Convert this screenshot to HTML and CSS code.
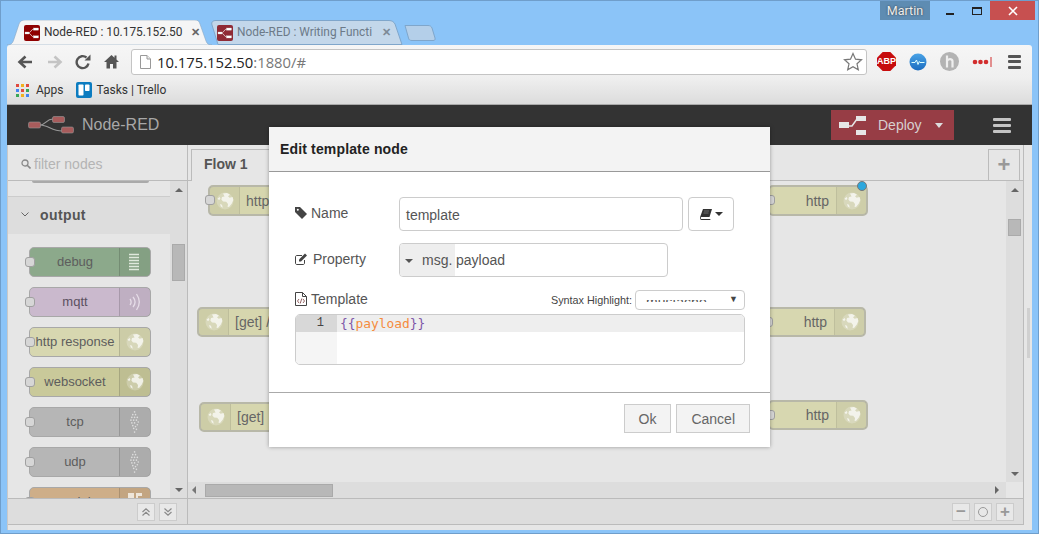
FILE: index.html
```html
<!DOCTYPE html>
<html>
  <head>
    <meta charset="utf-8">
    <title>Node-RED</title>
    <link rel="stylesheet" href="styles.css">
  </head>
  <body>
    <svg class="defs" width="0" height="0">
      <symbol id="globe" viewBox="0 0 18 18">
        <circle cx="9" cy="9" r="8.5" fill="#fff" opacity=".22"/>
        <path fill="#fff" opacity=".7" d="M7 1.500l4-.6 3 1.800-2 1.600 1.600 1.400 3-.6.8 3-1.600 3.400-2.600 3.200-1.600.2.400-3-1.800-2.200-3.200-.2-1.600-2L6 5l2.600-.6zM1.600 6.500l2.200-1.600.6 1.800-1.400 1.600zM4 12l2 .8.800 3-2-1.400z"/>
      </symbol>
      <symbol id="favicon" viewBox="0 0 16 16">
        <rect width="16" height="16" rx="2" fill="currentColor"/>
        <path d="M4 8c3 0 3-4 6-4M4 8c3 0 3 4 6 4" fill="none" stroke="#e8d8d8" stroke-width=".8"/>
        <rect x="1" y="7" width="4" height="2" fill="#fff" stroke="#ccc" stroke-width=".3"/>
        <rect x="9.500" y="3" width="5" height="2.200" fill="#fff" stroke="#ccc" stroke-width=".3"/>
        <rect x="9.500" y="10.800" width="5" height="2.200" fill="#fff" stroke="#ccc" stroke-width=".3"/>
      </symbol>
      <symbol id="udp-wave" viewBox="0 0 12 24">
        <g fill="#ddd">
          <circle cx="5" cy="1" r=".9"/><circle cx="3" cy="4" r=".9"/><circle cx="6" cy="4" r=".9"/><circle cx="2" cy="7" r=".9"/><circle cx="5" cy="7" r=".9"/><circle cx="8" cy="7" r=".9"/><circle cx="1" cy="10" r=".9"/><circle cx="4" cy="10" r=".9"/><circle cx="7" cy="10" r=".9"/><circle cx="9" cy="12" r=".9"/><circle cx="2" cy="13" r=".9"/><circle cx="5" cy="13" r=".9"/><circle cx="8" cy="15" r=".9"/><circle cx="3" cy="16" r=".9"/><circle cx="6" cy="17" r=".9"/><circle cx="4" cy="19" r=".9"/><circle cx="7" cy="20" r=".9"/><circle cx="5" cy="23" r=".9"/>
        </g>
      </symbol>
    </svg>

    <div class="window">
      <div class="titlebar">
        <span class="user-badge">Martin</span>
        <span class="win-btn win-min"><i></i></span>
        <span class="win-btn win-max"><i></i></span>
        <span class="win-btn win-close">
          <svg width="10" height="10" viewBox="0 0 10 10"><path d="M1 1l8 8M9 1l-8 8" stroke="#fff" stroke-width="1.600"/></svg>
        </span>
      </div>

      <div class="tabstrip">
        <div class="tab tab-active">
          <svg class="tab-shape" width="205" height="25" viewBox="0 0 205 25"><path d="M0 25C5 25 6 22 7 19L12 4C13 1 15 0 18 0H188C191 0 192 1 193 4L199 21C200 24 202 25 205 25Z" fill="#f5f5f5" stroke="#8aa8c4" stroke-width=".6"/></svg>
          <svg class="favicon fav-active" width="16" height="16"><use href="#favicon"/></svg>
          <span class="tab-title">Node-RED : 10.175.152.50</span>
          <span class="tab-close">&#10005;</span>
        </div>
        <div class="tab tab-back">
          <svg class="tab-shape" width="197" height="25" viewBox="0 0 197 25"><path d="M9 24.500L3 5C2 2 4 .500 7 .500H180C183 .500 185 2 186 4L193 24.500Z" fill="#c3d7ea" stroke="#7fa6cb"/></svg>
          <svg class="favicon fav-back" width="16" height="16"><use href="#favicon"/></svg>
          <span class="tab-title">Node-RED : Writing Functi</span>
          <span class="tab-close">&#10005;</span>
        </div>
        <svg class="tab-new" width="32" height="16" viewBox="0 0 32 16"><path d="M1 .500H24C26 .500 27 1 28 3L31 13C31.500 15 30.500 15.500 29 15.500H8C6 15.500 5 15 4.500 13Z" fill="#b4cfe9" stroke="#7fa6cb"/></svg>
      </div>

      <div class="toolbar">
        <svg class="nav-icon" width="16" height="14" viewBox="0 0 16 14"><path d="M15 7H4M8.500 1.500L2.500 7l6 5.500" fill="none" stroke="#555" stroke-width="2.600"/></svg>
        <svg class="nav-icon" width="16" height="14" viewBox="0 0 16 14"><path d="M1 7h11M7.500 1.500l6 5.500-6 5.500" fill="none" stroke="#c4c4c4" stroke-width="2.600"/></svg>
        <svg class="nav-icon" width="16" height="16" viewBox="0 0 16 16"><path d="M13.500 9.500A6 6 0 1 1 11.500 3.500" fill="none" stroke="#555" stroke-width="2.400"/><path d="M9.500 6.500h6v-6z" fill="#555"/></svg>
        <svg class="nav-icon" width="15" height="15" viewBox="0 0 15 15"><path d="M7.500 1L0 8h2.500v6.500h3.500V10h3v4.500h3.500V8H15l-2.500-2.400V1.500h-2v2.200z" fill="#555"/></svg>
        <div class="omnibox">
          <svg width="11" height="14" viewBox="0 0 11 14"><path d="M.5.500h6.500l3.500 3.500v9.500H.5z" fill="#fff" stroke="#999"/><path d="M7 .500V4h3.500" fill="#eee" stroke="#999"/></svg>
          <span class="url"><b>10.175.152.50</b>:1880/#</span>
          <svg class="star" width="20" height="19" viewBox="0 0 20 19"><path d="M10 1.500l2.500 5.700 6 .6-4.500 4 1.300 6L10 14.700l-5.300 3.100 1.300-6-4.500-4 6-.6z" fill="#fff" stroke="#777" stroke-width="1.200"/></svg>
        </div>
        <div class="extensions">
          <span class="ext-abp">ABP</span>
          <svg width="18" height="18" viewBox="0 0 18 18"><defs><linearGradient id="blueball" x1="0" y1="0" x2="0" y2="1"><stop offset="0" stop-color="#4aa3e6"/><stop offset="1" stop-color="#1a6cc0"/></linearGradient></defs><circle cx="9" cy="9" r="8.500" fill="url(#blueball)"/><path d="M2.500 9.500h3.500l1.500-2.500 1.500 4.500 1.300-3 .7 1h4.500" fill="none" stroke="#dff" stroke-width="1"/></svg>
          <svg width="19" height="19" viewBox="0 0 19 19"><circle cx="9.500" cy="9.500" r="9.500" fill="#b3b3b3"/><path d="M7 3.500v12M7 9c1-2.500 5-2.500 5.500 0v6.500" fill="none" stroke="#eee" stroke-width="2.200"/></svg>
          <svg width="20" height="10" viewBox="0 0 20 10"><g fill="#d22d2d"><circle cx="3" cy="5" r="2.300"/><circle cx="8.500" cy="5" r="2.300"/><circle cx="14" cy="5" r="2.300"/></g><rect x="18.500" width="1" height="10" fill="#d22d2d"/></svg>
          <span class="chrome-menu"><i></i><i></i><i></i></span>
        </div>
      </div>

      <div class="bookmarks">
        <span class="apps-grid"><i class="r"></i><i class="y"></i><i class="r"></i><i class="b"></i><i class="r"></i><i class="g"></i><i class="g"></i><i class="y"></i><i class="b"></i></span>
        <span class="bm-label">Apps</span>
        <svg class="trello" width="16" height="16" viewBox="0 0 16 16"><rect width="16" height="16" rx="2" fill="#0c7cc0"/><rect x="2.500" y="2.500" width="5" height="11" rx=".8" fill="#fff"/><rect x="9" y="2.500" width="4.500" height="6.500" rx=".8" fill="#fff"/></svg>
        <span class="bm-label">Tasks | Trello</span>
      </div>

      <header class="app-header">
        <svg class="logo" width="46" height="18" viewBox="0 0 46 18"><path d="M12 9C18 9 18 3 25 3M12 9C20 9 24 15 34 15" fill="none" stroke="#999" stroke-width="1.200"/><rect x=".5" y="6" width="12" height="6" rx="1.500" fill="#a85c5c" stroke="#999" stroke-width=".6"/><rect x="24.500" y=".500" width="12" height="6" rx="1.500" fill="#a85c5c" stroke="#999" stroke-width=".6"/><rect x="33.500" y="11" width="12" height="6" rx="1.500" fill="#a85c5c" stroke="#999" stroke-width=".6"/></svg>
        <span class="app-name">Node-RED</span>
        <div class="deploy">
          <svg width="28" height="23" viewBox="0 0 28 23"><path d="M9 12h4l5-7" fill="none" stroke="#e6e6e6" stroke-width="1.500"/><rect y="8" width="10" height="6" fill="#e6e6e6"/><rect x="17" y="2" width="10" height="5" fill="#e6e6e6"/><rect x="17" y="16" width="10" height="5" fill="#e6e6e6"/></svg>
          <span class="deploy-label">Deploy</span>
          <span class="deploy-caret"></span>
        </div>
        <span class="app-menu"><i></i><i></i><i></i></span>
      </header>

      <div class="main">
        <aside class="palette">
          <div class="palette-search">
            <svg width="10" height="10" viewBox="0 0 10 10"><circle cx="4" cy="4" r="3" fill="none" stroke="#888" stroke-width="1.300"/><path d="M6.200 6.200L9.500 9.500" stroke="#888" stroke-width="1.600"/></svg>
            <span>filter nodes</span>
          </div>
          <div class="palette-body">
            <div class="palette-list">
              <div class="stub"></div>
              <div class="category">
                <svg width="8" height="5" viewBox="0 0 8 5"><path d="M.5.500L4 4 7.500.500" fill="none" stroke="#666"/></svg>
                <span>output</span>
              </div>
              <div class="palette-nodes">
                <div class="pnode c-debug"><span class="port"></span><span class="pnode-label">debug</span><span class="pnode-icon"><svg width="14" height="18" viewBox="0 0 14 18"><path d="M1 1.500h10M1 4.500h10M1 7.500h10M1 10.500h10M1 13.500h10M1 16.500h10" stroke="#dfe8dc" stroke-width="1.600" fill="none"/></svg></span></div>
                <div class="pnode c-mqtt"><span class="port"></span><span class="pnode-label">mqtt</span><span class="pnode-icon"><svg width="14" height="20" viewBox="0 0 14 20"><path d="M2 7c1.500 2 1.500 4 0 6M5 5c2.500 3 2.500 7 0 10M8.500 2c3.500 5 3.500 11 0 16" fill="none" stroke="#e6dde8" stroke-width="1.300"/></svg></span></div>
                <div class="pnode c-http"><span class="port"></span><span class="pnode-label">http response</span><span class="pnode-icon"><svg width="18" height="18"><use href="#globe"/></svg></span></div>
                <div class="pnode c-socket"><span class="port"></span><span class="pnode-label">websocket</span><span class="pnode-icon"><svg width="18" height="18"><use href="#globe"/></svg></span></div>
                <div class="pnode c-net"><span class="port"></span><span class="pnode-label">tcp</span><span class="pnode-icon"><svg width="11" height="22"><use href="#udp-wave"/></svg></span></div>
                <div class="pnode c-net"><span class="port"></span><span class="pnode-label">udp</span><span class="pnode-icon"><svg width="11" height="22"><use href="#udp-wave"/></svg></span></div>
                <div class="pnode c-file"><span class="port"></span><span class="pnode-label">serial</span><span class="pnode-icon"><svg width="16" height="20" viewBox="0 0 16 20"><path d="M1 1h6v14H1zM9 1h6v3H11v11H9z" fill="#eee6da"/></svg></span></div>
              </div>
            </div>
            <div class="scrollbar scroll-v palette-scroll">
              <span class="arrow-up"></span>
              <span class="thumb"></span>
              <span class="arrow-down"></span>
            </div>
          </div>
          <div class="palette-footer">
            <span class="tool-btn"><svg width="8" height="8" viewBox="0 0 8 8"><path d="M.5 4L4 .8 7.500 4M.5 7.500L4 4.300l3.500 3.200" fill="none" stroke="#8a8a8a" stroke-width="1.200"/></svg></span>
            <span class="tool-btn"><svg width="8" height="8" viewBox="0 0 8 8"><path d="M.5.500L4 3.700 7.500.5M.5 4L4 7.200 7.500 4" fill="none" stroke="#8a8a8a" stroke-width="1.200"/></svg></span>
          </div>
        </aside>

        <section class="workspace">
          <div class="ws-tabs">
            <div class="ws-tab">Flow 1</div>
            <div class="ws-add">+</div>
          </div>
          <div class="ws-canvas-row">
            <div class="canvas">
              <div class="node c-canvas n1"><span class="port port-l"></span><span class="node-icon"><svg width="18" height="18"><use href="#globe"/></svg></span><span class="node-label">http</span></div>
              <div class="node c-canvas n2"><span class="node-icon"><svg width="18" height="18"><use href="#globe"/></svg></span><span class="node-label">[get] /</span></div>
              <div class="node c-canvas n3"><span class="node-icon"><svg width="18" height="18"><use href="#globe"/></svg></span><span class="node-label">[get]</span></div>
              <div class="node c-light r1"><span class="port port-l"></span><span class="node-label">http</span><span class="node-icon icon-r"><svg width="18" height="18"><use href="#globe"/></svg></span><span class="changed"></span></div>
              <div class="node c-light r2"><span class="port port-l"></span><span class="node-label">http</span><span class="node-icon icon-r"><svg width="18" height="18"><use href="#globe"/></svg></span></div>
              <div class="node c-light r3"><span class="port port-l"></span><span class="node-label">http</span><span class="node-icon icon-r"><svg width="18" height="18"><use href="#globe"/></svg></span></div>
            </div>
            <div class="scrollbar scroll-v canvas-scroll">
              <span class="arrow-up"></span>
              <span class="thumb"></span>
              <span class="arrow-down"></span>
            </div>
          </div>
          <div class="scroll-h-row">
            <div class="scroll-h">
              <span class="arrow-left"></span>
              <span class="thumb-h"></span>
              <span class="arrow-right"></span>
            </div>
            <div class="scroll-corner"></div>
          </div>
          <div class="ws-footer">
            <span class="tool-btn tool-zoom">&minus;</span>
            <span class="tool-btn tool-zoom"><i class="zoom-ring"></i></span>
            <span class="tool-btn tool-zoom">+</span>
          </div>
        </section>

        <div class="page-scroll"><span></span></div>
      </div>

      <div class="modal">
        <div class="modal-title">Edit template node</div>
        <div class="modal-body">
          <div class="form-row">
            <label class="form-label">
              <svg width="12" height="12" viewBox="0 0 12 12"><path d="M0 0h5l7 7-5 5-7-7z" fill="#444"/><circle cx="2.800" cy="2.800" r="1" fill="#fff"/></svg>
              Name
            </label>
            <div class="text-input name-input">template</div>
            <div class="book-btn">
              <svg width="12" height="11" viewBox="0 0 12 11"><path d="M3 0h9l-2.500 8H2C1 8 .7 8.500 .7 9s.3 1 1.300 1h8.500l-.3 1H1.500C.5 11 0 10 0 9c0-.5 0-1 .3-1.500z" fill="#333"/><path d="M4 2h5M3.500 4h5" stroke="#999" stroke-width=".6"/></svg>
              <span class="caret"></span>
            </div>
          </div>
          <div class="form-row">
            <label class="form-label">
              <svg width="13" height="12" viewBox="0 0 13 12"><path d="M9.500 7v3c0 1-.5 1.500-1.500 1.500H2C1 11.500.5 11 .5 10V4C.5 3 1 2.500 2 2.500h5" fill="none" stroke="#444"/><path d="M4 6.500L10 .5l2 2-6 6H4z" fill="#444"/></svg>
              <span class="prop-text">Property</span>
            </label>
            <div class="typed-input">
              <span class="typed-type"><span class="caret"></span>msg.</span>
              <span class="typed-value">payload</span>
            </div>
          </div>
          <div class="template-row">
            <label class="form-label">
              <svg width="12" height="14" viewBox="0 0 12 14"><path d="M.5.500h7l4 4v9H.5z" fill="none" stroke="#444"/><path d="M7.500.500v4h4" fill="none" stroke="#444"/><path d="M4 7L2.500 9 4 11M8 7l1.500 2L8 11M6.800 6.500L5.200 11.500" fill="none" stroke="#7a3b3b" stroke-width=".8"/></svg>
              Template
            </label>
            <div class="syntax">
              <span class="syntax-label">Syntax Highlight:</span>
              <div class="syntax-select">
                <span class="syntax-clip"><span>mustache</span></span>
                <span class="syntax-arrow">&#9660;</span>
              </div>
            </div>
          </div>
          <div class="editor">
            <div class="editor-line">
              <span class="gutter-num">1</span>
              <code class="code"><span class="brace">{{</span><span class="var">payload</span><span class="brace">}}</span></code>
            </div>
            <div class="editor-rest"><span class="gutter-rest"></span></div>
          </div>
        </div>
        <div class="modal-footer">
          <span class="btn">Ok</span>
          <span class="btn">Cancel</span>
        </div>
      </div>
    </div>
  </body>
</html>
```

FILE: styles.css
```css
* { box-sizing: border-box; }
body {
  margin: 0;
  width: 1039px;
  height: 534px;
  overflow: hidden;
  font-family: "Liberation Sans", Arial, sans-serif;
  font-size: 14px;
  color: #555;
}
.defs { position: absolute; }
.window {
  position: relative;
  width: 1039px;
  height: 534px;
  display: flex;
  flex-direction: column;
  padding: 0 6px 3px;
  background: #8bc4f8;
  border: 1px solid #6f9ecb;
  overflow: hidden;
}

/* window controls */
.titlebar {
  height: 19px;
  margin-right: -3px;
  display: flex;
  justify-content: flex-end;
  flex: none;
}
.user-badge {
  width: 50px;
  margin-right: 8px;
  background: #5e8cb2;
  color: #eee;
  font: 12.500px/20px Roboto, sans-serif;
  text-align: center;
  text-shadow: 0 0 2px #333;
}
.win-btn {
  width: 26px;
  display: flex;
  align-items: center;
  justify-content: center;
}
.win-min i { width: 8px; height: 2px; margin: 7px 2px 0 0; background: #222; }
.win-max i { width: 10px; height: 8px; border: 1px solid #222; border-top-width: 2px; }
.win-close { width: 45px; margin-left: 0; background: #c75050; }

/* browser tabs */
.tabstrip {
  height: 25px;
  flex: none;
  display: flex;
  align-items: flex-start;
  color: #333;
  font: 11.900px/25px Roboto, sans-serif;
}
.tab {
  position: relative;
  height: 25px;
  display: flex;
  align-items: center;
  flex: none;
}
.tab-shape { position: absolute; left: 0; top: 0; }
.tab-active { width: 205px; padding-left: 17px; }
.tab-back { width: 197px; margin-left: -3px; padding-left: 8px; color: #6c7a88; }
.favicon { position: relative; flex: none; margin-right: 4px; }
.fav-active { color: #8f0000; }
.fav-back { color: #8f2a35; }
.tab-title { position: relative; width: 139px; white-space: nowrap; overflow: hidden; }
.tab-close {
  position: relative;
  margin-left: 8px;
  color: #666;
  font-size: 11px;
  font-weight: bold;
}
.tab-back .tab-close { margin-left: 6px; color: #7d8a96; }
.tab-new { margin: 5px 0 0 -2px; flex: none; }

/* browser toolbar */
.toolbar {
  height: 33px;
  flex: none;
  display: flex;
  align-items: center;
  padding-left: 10px;
  background: linear-gradient(#f6f6f6, #efefef);
  border-radius: 3px 3px 0 0;
}
.nav-icon { margin-right: 14px; flex: none; }
.nav-icon + .nav-icon { margin-right: 12px; }
.nav-icon + .nav-icon + .nav-icon { margin-right: 13px; }
.omnibox {
  width: 736px;
  height: 26px;
  margin-left: -1px;
  flex: none;
  display: flex;
  align-items: center;
  padding: 0 3px 0 8px;
  background: #fff;
  border: 1px solid #c4c4c4;
  border-radius: 3px;
}
.url {
  margin-left: 6px;
  color: #777;
  font: 14.800px "Open Sans", sans-serif;
}
.url b { font-weight: normal; color: #222; }
.star { margin-left: auto; }
.extensions {
  flex: 1;
  display: flex;
  align-items: center;
  gap: 13px;
  padding-left: 10px;
}
.ext-abp {
  width: 19px;
  height: 19px;
  background: #c70d0d;
  color: #fff;
  font: bold 9px/19px "Liberation Sans", sans-serif;
  text-align: center;
  clip-path: polygon(30% 0, 70% 0, 100% 30%, 100% 70%, 70% 100%, 30% 100%, 0 70%, 0 30%);
}
.chrome-menu {
  width: 13px;
  margin-left: 3px;
  display: flex;
  flex-direction: column;
  gap: 2.500px;
}
.chrome-menu i { height: 3px; background: #555; border-radius: 1px; }

/* bookmarks bar */
.bookmarks {
  height: 27px;
  flex: none;
  display: flex;
  align-items: center;
  padding: 0 0 2px 9px;
  background: linear-gradient(#efefef, #dcdcdc);
  border-bottom: 1px solid #aaa;
  color: #333;
  font: 12px Roboto, sans-serif;
}
.apps-grid {
  width: 13px;
  height: 13px;
  display: grid;
  grid-template-columns: repeat(3, 3px);
  gap: 2px;
}
.apps-grid .r { background: #e04a3f; }
.apps-grid .y { background: #f2b01e; }
.apps-grid .g { background: #3aa757; }
.apps-grid .b { background: #4285f4; }
.bm-label { margin-left: 7px; }
.trello { margin-left: 12px; }
.trello + .bm-label { margin-left: 5px; }

/* Node-RED header */
.app-header {
  height: 40px;
  flex: none;
  display: flex;
  align-items: center;
  padding-left: 21px;
  background: #333;
}
.app-name { margin-left: 8px; color: #a8a8a8; font-size: 16px; }
.deploy {
  width: 123px;
  height: 30px;
  margin-left: auto;
  display: flex;
  align-items: center;
  padding-left: 8px;
  background: #973d45;
  color: #d8d0d0;
}
.deploy-label { margin-left: 11px; }
.deploy-caret {
  margin-left: 13px;
  border: 4px solid transparent;
  border-top: 5px solid #ddd;
  border-bottom: 0;
}
.app-menu {
  width: 18px;
  margin: 0 21px 0 39px;
  display: flex;
  flex-direction: column;
  gap: 3px;
}
.app-menu i { height: 3px; background: #c4c4c4; border-radius: 1px; }

/* main area */
.main {
  flex: 1;
  min-height: 0;
  display: flex;
  background: #e6e6e6;
  border-left: 1px solid #c8c8c8;
}
.palette {
  width: 180px;
  flex: none;
  display: flex;
  flex-direction: column;
  border-right: 1px solid #bbb;
  border-bottom: 1px solid #bbb;
  margin-bottom: 5px;
}
.palette-search {
  height: 36px;
  flex: none;
  display: flex;
  align-items: center;
  gap: 3px;
  padding: 2px 0 0 13px;
  border-bottom: 1px solid #bbb;
  color: #b4b4b4;
}
.palette-body { flex: 1; min-height: 0; display: flex; }
.palette-list { flex: 1; overflow: hidden; }
.stub {
  width: 117px;
  height: 2px;
  margin-left: 24px;
  background: #aaa;
  border-radius: 0 0 3px 3px;
}
.category {
  height: 38px;
  margin-top: 13px;
  display: flex;
  align-items: center;
  gap: 11px;
  padding: 0 0 2px 13px;
  background: #ddd;
  border-top: 1px solid #ccc;
  color: #555;
  font-weight: bold;
  letter-spacing: .4px;
}
.palette-nodes {
  display: flex;
  flex-direction: column;
  gap: 10px;
  padding: 13px 0 0 21px;
}
.pnode {
  position: relative;
  width: 122px;
  height: 30px;
  flex: none;
  display: flex;
  align-items: center;
  border: 1px solid #a8a8a8;
  border-radius: 5px;
  font-size: 13px;
  color: #5d5d5d;
}
.pnode-label { flex: 1; padding: 0 0 2px 1px; text-align: center; white-space: nowrap; }
.pnode-icon {
  width: 31px;
  height: 28px;
  flex: none;
  display: flex;
  align-items: center;
  justify-content: center;
  background: rgba(0, 0, 0, .05);
  border-left: 1px solid rgba(0, 0, 0, .12);
}
.port {
  position: absolute;
  left: -5px;
  top: 9px;
  width: 10px;
  height: 10px;
  background: #d6d6d6;
  border: 1px solid #a0a0a0;
  border-radius: 3px;
}
.c-debug { background: #8ca98b; }
.c-mqtt { background: #cab9cd; color: #5a5060; }
.c-http { background: #d7d7b0; }
.c-socket { background: #c9c99a; }
.c-net { background: #b6b6b6; }
.c-file { background: #ceae88; }

/* scrollbars */
.scrollbar {
  position: relative;
  width: 17px;
  flex: none;
  background: #ddd;
}
.arrow-up, .arrow-down, .arrow-left, .arrow-right { position: absolute; width: 0; height: 0; }
.arrow-up {
  top: 7px;
  left: 5px;
  border: 4px solid transparent;
  border-top: 0;
  border-bottom: 4px solid #666;
}
.arrow-down {
  bottom: 6px;
  left: 5px;
  border: 4px solid transparent;
  border-bottom: 0;
  border-top: 4px solid #666;
}
.arrow-left {
  top: 4px;
  left: 4px;
  border: 4px solid transparent;
  border-left: 0;
  border-right: 4px solid #777;
}
.arrow-right {
  top: 4px;
  right: 7px;
  border: 4px solid transparent;
  border-right: 0;
  border-left: 4px solid #666;
}
.thumb {
  position: absolute;
  left: 2px;
  width: 13px;
  background: #b8b8b8;
  border: 1px solid #aaa;
}
.palette-scroll .thumb { top: 63px; height: 37px; }
.canvas-scroll .thumb { top: 38px; height: 17px; }
.palette-footer, .ws-footer {
  height: 26px;
  flex: none;
  display: flex;
  justify-content: flex-end;
  align-items: center;
  gap: 4px;
  background: #ddd;
  border-top: 1px solid #bbb;
}
.palette-footer { padding-right: 10px; }
.tool-btn {
  width: 18px;
  height: 18px;
  display: flex;
  align-items: center;
  justify-content: center;
  background: #e8e8e8;
  border: 1px solid #ccc;
  color: #999;
}
.tool-zoom { font: bold 17px/16px "Liberation Sans", sans-serif; }
.zoom-ring {
  width: 10px;
  height: 10px;
  border: 1.500px solid #999;
  border-radius: 50%;
}

/* workspace */
.workspace {
  width: 836px;
  flex: none;
  display: flex;
  flex-direction: column;
  margin-bottom: 5px;
  border-right: 1px solid #bbb;
  border-bottom: 1px solid #bbb;
}
.ws-tabs {
  height: 36px;
  flex: none;
  display: flex;
  justify-content: space-between;
  padding: 4px 3px 0 3px;
  border-bottom: 1px solid #bbb;
}
.ws-tab {
  width: 200px;
  margin-bottom: -1px;
  padding: 6px 12px 0;
  background: #e6e6e6;
  border: 1px solid #bbb;
  border-bottom: 0;
  color: #555;
  font-weight: bold;
}
.ws-add {
  width: 32px;
  text-align: center;
  border: 1px solid #bbb;
  border-bottom: 0;
  color: #999;
  font: bold 22px/30px "Liberation Sans", sans-serif;
}
.ws-canvas-row { flex: 1; min-height: 0; display: flex; }
.canvas { position: relative; flex: 1; overflow: hidden; }
.canvas-scroll { margin-right: 0; }
.scroll-h-row { height: 16px; flex: none; display: flex; }
.scroll-h { position: relative; flex: 1; background: #ddd; }
.thumb-h {
  position: absolute;
  left: 17px;
  top: 2px;
  width: 128px;
  height: 13px;
  background: #b8b8b8;
  border: 1px solid #aaa;
}
.scroll-corner { width: 17px; background: #e6e6e6; }
.ws-footer { padding-right: 9px; }
.page-scroll { position: relative; flex: 1; }
.page-scroll span {
  position: absolute;
  left: 3px;
  top: 163px;
  width: 3px;
  height: 50px;
  background: #d0d0d0;
}

/* canvas nodes, origin is the canvas corner */
.node {
  position: absolute;
  height: 31px;
  display: flex;
  align-items: center;
  border: 2px solid #b8b8a8;
  border-radius: 5px;
  color: #666;
}
.node-icon {
  width: 30px;
  height: 100%;
  flex: none;
  display: flex;
  align-items: center;
  justify-content: center;
  background: rgba(0, 0, 0, .04);
  border-right: 1px solid rgba(0, 0, 0, .07);
}
.icon-r { border-right: 0; border-left: 1px solid rgba(0, 0, 0, .07); }
.node-label { flex: 1; padding: 0 6px; white-space: nowrap; }
.c-canvas { background: #d6d6ae; }
.c-light { background: #d7d7b0; }
.c-light .node-label { padding-right: 7px; text-align: right; }
.port-l { top: 8px; }
.changed {
  position: absolute;
  right: -1px;
  top: -6px;
  width: 10px;
  height: 10px;
  background: #2ca7dd;
  border: 1px solid #777;
  border-radius: 50%;
}
.n1 { left: 20px; top: 4px; width: 200px; }
.n2 { left: 9px; top: 126px; width: 200px; height: 30px; }
.n3 { left: 11px; top: 221px; width: 200px; height: 30px; }
.r1 { left: 580px; top: 4px; width: 100px; }
.r2 { left: 578px; top: 126px; width: 100px; height: 30px; }
.r3 { left: 580px; top: 219px; width: 100px; height: 30px; }

/* edit dialog */
.modal {
  position: absolute;
  left: 268px;
  top: 126px;
  width: 501px;
  height: 320px;
  background: #fff;
  box-shadow: 0 0 4px rgba(0, 0, 0, .35);
}
.modal-title {
  height: 45px;
  padding-left: 11px;
  background: #f3f3f3;
  border-bottom: 1px solid #999;
  color: #222;
  font-weight: bold;
  line-height: 44px;
  letter-spacing: .15px;
}
.modal-body { height: 220px; padding: 25px 25px 0 26px; }
.form-row { height: 34px; margin-bottom: 12px; display: flex; align-items: center; }
.form-label {
  width: 104px;
  flex: none;
  display: flex;
  align-items: center;
  gap: 4px;
  margin-top: -2px;
  color: #555;
}
.prop-text { margin-left: 1px; }
.text-input, .typed-input, .book-btn, .syntax-select {
  background: #fff;
  border: 1px solid #ccc;
  border-radius: 4px;
}
.text-input {
  width: 284px;
  height: 34px;
  padding-left: 6px;
  line-height: 34px;
  color: #555;
}
.book-btn {
  width: 46px;
  height: 34px;
  margin-left: 5px;
  display: flex;
  align-items: center;
  justify-content: center;
  gap: 3px;
}
.caret {
  display: inline-block;
  border: 4px solid transparent;
  border-top: 4px solid #333;
  border-bottom: 0;
}
.typed-input {
  width: 269px;
  height: 34px;
  display: flex;
  align-items: center;
  overflow: hidden;
}
.typed-type {
  width: 55px;
  height: 100%;
  display: flex;
  align-items: center;
  gap: 9px;
  padding-left: 5px;
  background: #eee;
  color: #555;
}
.typed-type .caret { margin-top: 2px; border-top-color: #555; }
.typed-value { margin-left: 1px; color: #555; }
.template-row {
  height: 20px;
  margin-top: 13px;
  display: flex;
  justify-content: space-between;
  align-items: center;
}
.template-row .form-label { margin-top: -2px; }
.syntax { display: flex; align-items: center; gap: 3px; }
.syntax-label { color: #444; font-size: 10.800px; }
.syntax-select {
  position: relative;
  width: 110px;
  height: 20px;
  padding: 9px 0 0 10px;
}
.syntax-clip {
  display: block;
  height: 2px;
  overflow: hidden;
  color: #555;
  font-size: 14px;
  line-height: 14px;
}
.syntax-clip span { display: block; margin-top: -5px; }
.syntax-arrow {
  position: absolute;
  right: 6px;
  top: 3px;
  color: #444;
  font-size: 9px;
}
.editor {
  height: 51px;
  margin-top: 4px;
  overflow: hidden;
  border: 1px solid #ccc;
  border-radius: 5px;
}
.editor-line {
  height: 17px;
  display: flex;
  background: #eee;
}
.gutter-num {
  width: 41px;
  flex: none;
  padding-right: 13px;
  background: #d8d8d8;
  color: #444;
  font: 12px/17px "Liberation Mono", monospace;
  text-align: right;
}
.code { padding-left: 3px; font: 12.900px/17px "DejaVu Sans Mono", monospace; }
.brace { color: #7e57a8; }
.var { color: #f58b3d; }
.editor-rest { height: 32px; }
.gutter-rest { display: block; width: 41px; height: 100%; background: #f5f5f5; }
.modal-footer {
  height: 55px;
  display: flex;
  justify-content: flex-end;
  align-items: flex-start;
  gap: 5px;
  padding: 11px 20px 0 0;
  border-top: 1px solid #aaa;
}
.btn {
  height: 29px;
  padding: 0 14px;
  background: #f3f3f3;
  border: 1px solid #ccc;
  color: #666;
  line-height: 29px;
}
```
